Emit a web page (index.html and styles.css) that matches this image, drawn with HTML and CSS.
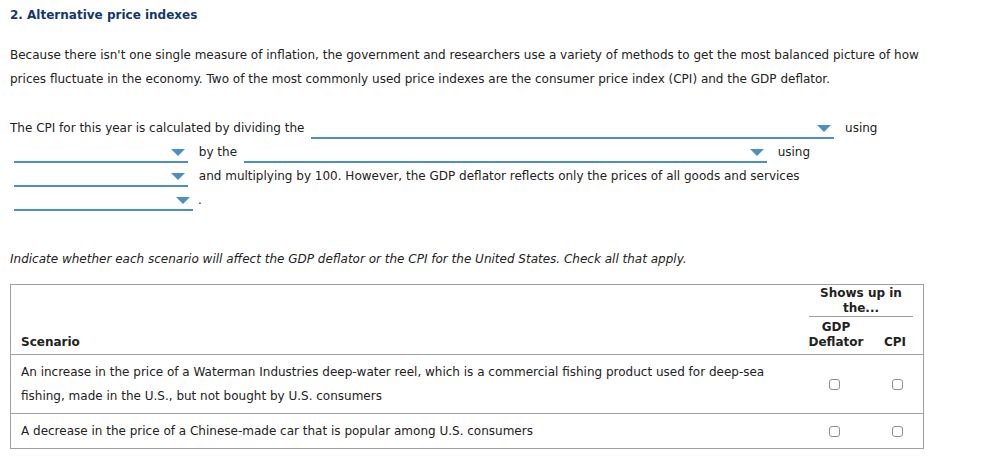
FILE: index.html
```html
<!DOCTYPE html>
<html>
<head>
<meta charset="utf-8">
<link rel="stylesheet" href="styles.css">
</head>
<body>
<div class="page">
  <h2 class="title">2. Alternative price indexes</h2>
  <p class="para">Because there isn't one single measure of inflation, the government and researchers use a variety of methods to get the most balanced picture of how prices fluctuate in the economy. Two of the most commonly used price indexes are the consumer price index (CPI) and the GDP deflator.</p>
  <p class="para fill">The CPI for this year is calculated by dividing the <span class="dd dd-long"></span> using <span class="dd dd-short"></span> by the <span class="dd dd-long"></span> using <span class="dd dd-short"></span> and multiplying by 100. However, the GDP deflator reflects only the prices of all goods and services <span class="dd dd-last"></span>.</p>
  <p class="para instr">Indicate whether each scenario will affect the GDP deflator or the CPI for the United States. Check all that apply.</p>
  <table class="grid">
    <thead>
      <tr>
        <th class="scen-head" rowspan="2">Scenario</th>
        <th class="group-head" colspan="2"><div class="group-label">Shows up in the...</div></th>
      </tr>
      <tr>
        <th class="col-head col-gdp">GDP Deflator</th>
        <th class="col-head col-cpi">CPI</th>
      </tr>
    </thead>
    <tbody>
      <tr>
        <td class="scen">An increase in the price of a Waterman Industries deep-water reel, which is a commercial fishing product used for deep-sea fishing, made in the U.S., but not bought by U.S. consumers</td>
        <td class="chk"><input type="checkbox" class="box"></td>
        <td class="chk"><input type="checkbox" class="box"></td>
      </tr>
      <tr>
        <td class="scen">A decrease in the price of a Chinese-made car that is popular among U.S. consumers</td>
        <td class="chk"><input type="checkbox" class="box"></td>
        <td class="chk"><input type="checkbox" class="box"></td>
      </tr>
    </tbody>
  </table>
</div>
</body>
</html>
```

FILE: styles.css
```css
html, body {
  margin: 0;
  padding: 0;
  background: #ffffff;
}
body {
  font-family: Verdana, "DejaVu Sans", sans-serif;
  font-size: 12px;
  color: #222222;
}
.page {
  width: 914px;
  padding: 7px 10px 0 10px;
}
.title {
  margin: 0;
  font-size: 12px;
  line-height: 16px;
  font-weight: bold;
  color: #12386b;
}
.para {
  margin: 20px 0 0 0;
  line-height: 24px;
}
.fill {
  margin-top: 25px;
}
.instr {
  margin-top: 35px;
  font-style: italic;
}
.dd {
  display: inline-block;
  position: relative;
  height: 14px;
  vertical-align: -7px;
  border-bottom: 2px solid #4a8fc8;
  margin: 0 7px 0 4px;
}
.dd::after {
  content: "";
  position: absolute;
  right: 3px;
  top: 2px;
  width: 0;
  height: 0;
  border-left: 7px solid transparent;
  border-right: 7px solid transparent;
  border-top: 7px solid #4a8fc8;
}
.dd-long { width: 523px; margin-left: 3px; }
.dd-short { width: 174px; }
.dd-last { width: 179px; margin-right: 5px; }
.grid {
  margin-top: 13px;
  width: 914px;
  border-collapse: collapse;
  border: 1px solid #a0a0a0;
}
.grid th {
  font-weight: bold;
  line-height: 15px;
}
.scen-head {
  text-align: left;
  vertical-align: bottom;
  padding: 0 10px 4px 10px;
}
.group-head {
  padding: 1px 10px 0 12px;
  text-align: center;
}
.group-label {
  border-bottom: 1px solid #a0a0a0;
  padding-bottom: 0;
}
.col-head {
  vertical-align: bottom;
  text-align: center;
  padding: 3px 0 4px 0;
}
.col-gdp { width: 62px; padding-left: 8px; padding-right: 4px; }
.col-cpi { width: 36px; padding-right: 10px; padding-left: 6px; }
.grid tbody td {
  border-top: 1px solid #a0a0a0;
  line-height: 24px;
  padding: 5px 10px;
}
.grid tbody td.chk {
  text-align: center;
  vertical-align: middle;
  padding: 5px 0;
}
.box {
  appearance: none;
  -webkit-appearance: none;
  width: 11px;
  height: 11px;
  margin: 0;
  border: 1px solid #8e8e8e;
  border-radius: 3px;
  background: #fff;
  vertical-align: middle;
}
```
